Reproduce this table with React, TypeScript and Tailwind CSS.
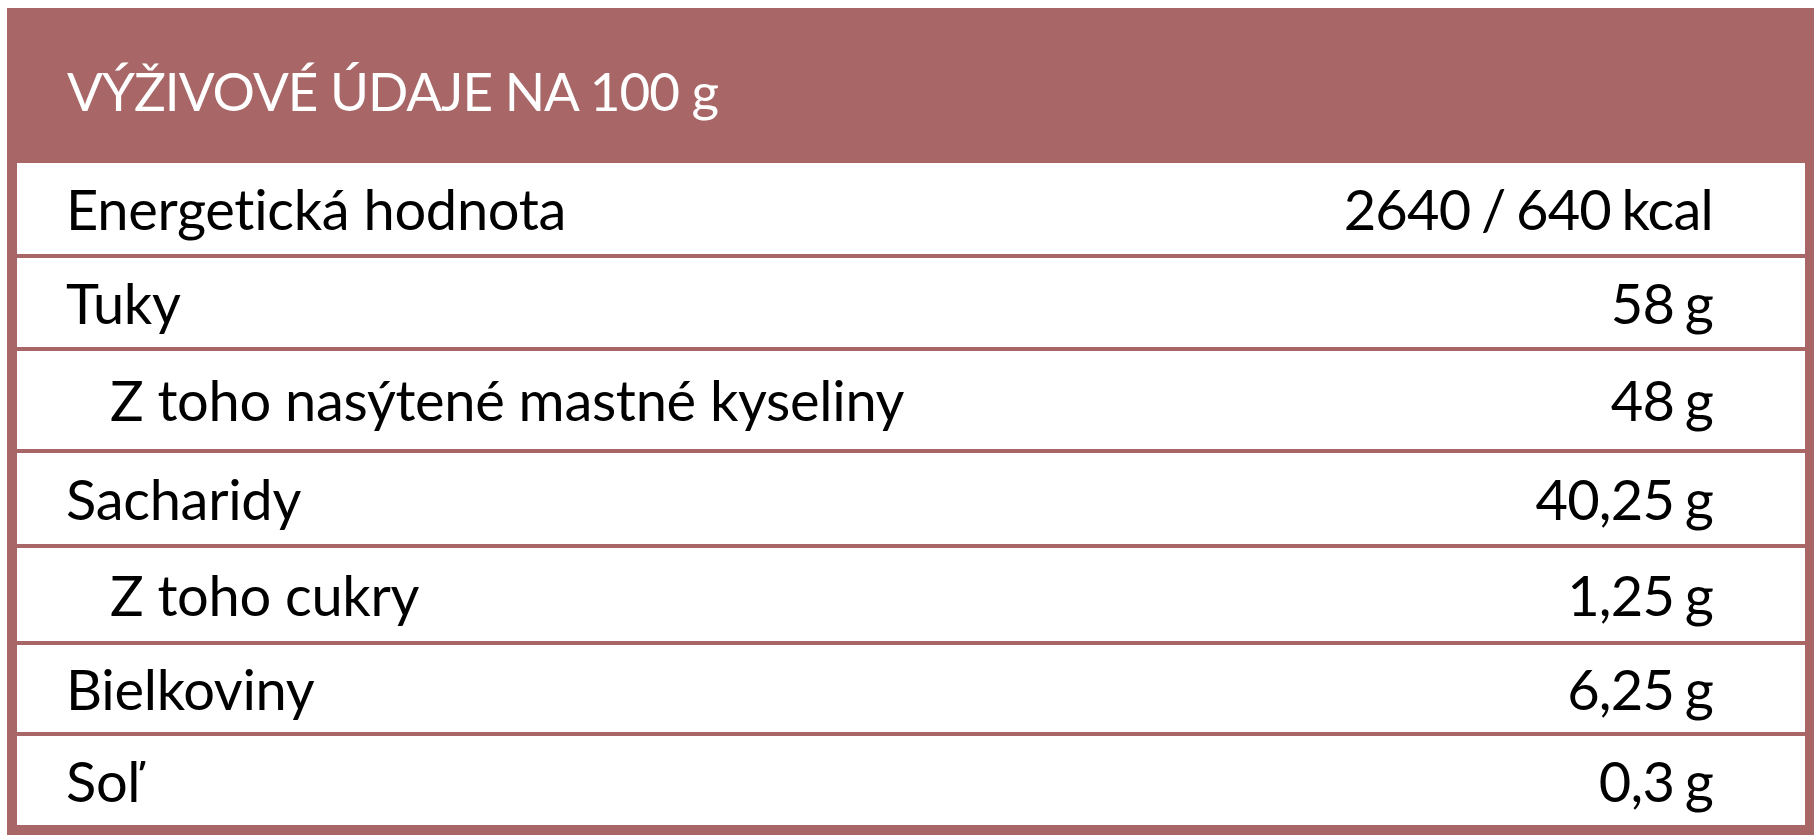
const rows = [
  { label: "Energetická hodnota", value: "2640 / 640 kcal", h: "h-[91px]", sub: false },
  { label: "Tuky", value: "58 g", h: "h-[93px]", sub: false },
  { label: "Z toho nasýtené mastné kyseliny", value: "48 g", h: "h-[102px]", sub: true },
  { label: "Sacharidy", value: "40,25 g", h: "h-[95px]", sub: false },
  { label: "Z toho cukry", value: "1,25 g", h: "h-[97px]", sub: true },
  { label: "Bielkoviny", value: "6,25 g", h: "h-[91px]", sub: false },
  { label: "Soľ", value: "0,3 g", h: "h-[93px]", sub: false },
];

export default function App() {
  return (
    <div className="w-full h-[838px] bg-white pt-[8px] pl-[7px] font-['Lato',_'Open_Sans',_sans-serif]">
      <div className="w-[1807px] bg-[#a86667] pb-[10px]">
        <div className="h-[155px] pt-[51px] pl-[60px]">
          <h2 className="text-[53px] leading-[1.2] font-normal tracking-[-1px] text-white">
            VÝŽIVOVÉ ÚDAJE NA 100 g
          </h2>
        </div>
        <div className="ml-[10px] w-[1788px] bg-white">
          {rows.map((row, i) => (
            <div
              key={row.label}
              className={`${row.h} flex items-center justify-between pr-[92px] ${
                row.sub ? "pl-[93px]" : "pl-[49px]"
              } ${i > 0 ? "border-t-4 border-[#a86667]" : ""}`}
            >
              <span className="text-[56px] leading-[1.2] tracking-[-0.3px] text-black">{row.label}</span>
              <span className="text-[56px] leading-[1.2] tracking-[-0.8px] [word-spacing:-3px] text-black">
                {row.value}
              </span>
            </div>
          ))}
        </div>
      </div>
    </div>
  );
}
